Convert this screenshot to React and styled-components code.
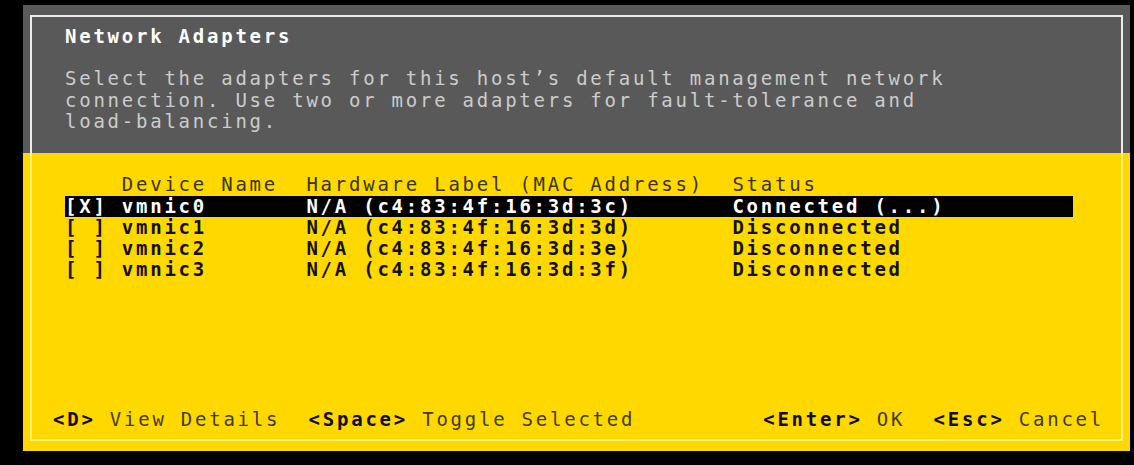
import React from 'react';
import styled, { createGlobalStyle } from 'styled-components';

const CELL = 14.2;
const LINE = 21.2;

const GlobalStyle = createGlobalStyle`
  html, body {
    margin: 0;
    padding: 0;
    background: #000;
    width: 1134px;
    height: 465px;
    overflow: hidden;
  }
  body {
    font-family: "DejaVu Sans Mono", "Liberation Mono", monospace;
    font-size: 19px;
    letter-spacing: 2.76px;
    line-height: ${LINE}px;
  }
`;

const Screen = styled.div`
  width: 1134px;
  height: 465px;
  background: #000;
  padding: 5px 0 0 23px;
  box-sizing: border-box;
`;

const Frame = styled.div`
  width: 1107px;
  height: 446px;
  display: flex;
  flex-direction: column;
`;

const HeaderPanel = styled.div`
  background: #595959;
  height: 148px;
  padding: 10px 7px 0 7px;
  box-sizing: border-box;
`;

const HeaderInner = styled.div`
  height: 100%;
  box-sizing: border-box;
  border: 2px solid #ececec;
  border-bottom: none;
  padding: 9px 0 0 33px;
`;

const Title = styled.div`
  color: #fff;
  font-weight: bold;
  white-space: pre;
`;

const Description = styled.div`
  margin-top: ${LINE}px;
  color: #cccccc;
  white-space: pre;
`;

const BodyPanel = styled.div`
  flex: 1;
  background: #ffd800;
  padding: 0 7px 10px 7px;
  box-sizing: border-box;
  display: flex;
`;

const BodyInner = styled.div`
  flex: 1;
  box-sizing: border-box;
  border: 2px solid #fff27c;
  border-top: none;
  padding: 21px 17px 9px 0;
  display: flex;
  flex-direction: column;
`;

const Table = styled.div`
  margin-left: 33px;
  width: ${71 * CELL}px;
`;

const Row = styled.div`
  display: flex;
  height: 21px;
  line-height: 21px;
  margin-bottom: ${({ $head }) => ($head ? '1px' : '0')};
  white-space: pre;
  background: ${({ $selected }) => ($selected ? '#000' : 'transparent')};
  color: ${({ $selected, $head }) => ($selected ? '#fff' : $head ? '#3a3400' : '#141000')};
  font-weight: ${({ $head }) => ($head ? 'normal' : 'bold')};
`;

const Cell = styled.span`
  width: ${({ $cols }) => ($cols ? `${$cols * CELL}px` : 'auto')};
  flex: ${({ $cols }) => ($cols ? 'none' : '1')};
  overflow: hidden;
`;

const Footer = styled.div`
  margin-top: auto;
  display: flex;
  padding-left: 21px;
  white-space: pre;
`;

const Group = styled.div`
  display: flex;
  margin-left: ${({ $right }) => ($right ? 'auto' : '0')};
`;

const Hint = styled.span`
  margin-right: ${({ $last }) => ($last ? 0 : `${2 * CELL}px`)};
`;

const Key = styled.span`
  color: #120f00;
  font-weight: bold;
`;

const Label = styled.span`
  color: #433c00;
`;

const adapters = [
  { name: 'vmnic0', mac: 'c4:83:4f:16:3d:3c', status: 'Connected (...)', on: true },
  { name: 'vmnic1', mac: 'c4:83:4f:16:3d:3d', status: 'Disconnected', on: false },
  { name: 'vmnic2', mac: 'c4:83:4f:16:3d:3e', status: 'Disconnected', on: false },
  { name: 'vmnic3', mac: 'c4:83:4f:16:3d:3f', status: 'Disconnected', on: false },
];

const App = () => {
  return (
    <Screen>
      <GlobalStyle />
      <Frame>
        <HeaderPanel>
          <HeaderInner>
            <Title>Network Adapters</Title>
            <Description>
              {'Select the adapters for this host\u2019s default management network\n'}
              {'connection. Use two or more adapters for fault-tolerance and\n'}
              {'load-balancing.'}
            </Description>
          </HeaderInner>
        </HeaderPanel>
        <BodyPanel>
          <BodyInner>
            <Table>
              <Row $head>
                <Cell $cols={4}> </Cell>
                <Cell $cols={13}>Device Name</Cell>
                <Cell $cols={30}>Hardware Label (MAC Address)</Cell>
                <Cell>Status</Cell>
              </Row>
              {adapters.map((a) => (
                <Row key={a.name} $selected={a.on}>
                  <Cell $cols={4}>{a.on ? '[X]' : '[ ]'}</Cell>
                  <Cell $cols={13}>{a.name}</Cell>
                  <Cell $cols={30}>{`N/A (${a.mac})`}</Cell>
                  <Cell>{a.status}</Cell>
                </Row>
              ))}
            </Table>
            <Footer>
              <Group>
                <Hint><Key>&lt;D&gt;</Key><Label> View Details</Label></Hint>
                <Hint $last><Key>&lt;Space&gt;</Key><Label> Toggle Selected</Label></Hint>
              </Group>
              <Group $right>
                <Hint><Key>&lt;Enter&gt;</Key><Label> OK</Label></Hint>
                <Hint $last><Key>&lt;Esc&gt;</Key><Label> Cancel</Label></Hint>
              </Group>
            </Footer>
          </BodyInner>
        </BodyPanel>
      </Frame>
    </Screen>
  );
};

export default App;
